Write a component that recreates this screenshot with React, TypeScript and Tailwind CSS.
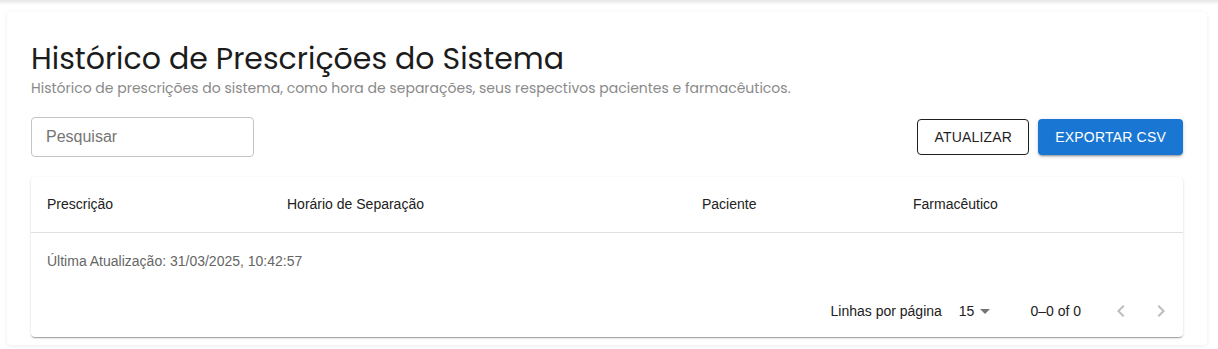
import React from 'react';

// --- Prescription history page ---
const columns = [
  { label: 'Prescrição', width: 'w-[240px]' },
  { label: 'Horário de Separação', width: 'w-[415px]' },
  { label: 'Paciente', width: 'w-[211px]' },
  { label: 'Farmacêutico', width: 'flex-1' },
];

const Chevron = ({ dir }: { dir: 'left' | 'right' }) => (
  <svg width="24" height="24" viewBox="0 0 24 24" fill="#bdbdbd">
    {dir === 'left' ? (
      <path d="M15.41 7.41 14 6l-6 6 6 6 1.41-1.41L10.83 12z" />
    ) : (
      <path d="M10 6 8.59 7.41 13.17 12l-4.58 4.59L10 18l6-6z" />
    )}
  </svg>
);

export default function App() {
  return (
    <div className="relative min-h-[349px] bg-white font-['Liberation_Sans',Arial,sans-serif]">
      <div className="absolute inset-x-0 top-0 h-[5px] bg-gradient-to-b from-[#e6e6e6] to-white" />
      <div className="pl-[7px] pr-[11px] pt-[12px]">
        <div className="rounded-[4px] bg-white px-6 pt-[28px] pb-[8px] shadow-[0_1px_4px_rgba(0,0,0,0.08)]">
          <h1 className="font-['Poppins','Inter',sans-serif] text-[30px] leading-[38px] text-[#1c1c1c]">
            Histórico de Prescrições do Sistema
          </h1>
          <p className="font-['Poppins','Inter',sans-serif] text-[14px] leading-[20px] text-[#8a8a8a]">
            Histórico de prescrições do sistema, como hora de separações, seus respectivos pacientes e farmacêuticos.
          </p>

          <div className="mt-[19px] flex items-center justify-between">
            <div className="flex h-[40px] w-[223px] items-center rounded-[4px] border border-[#c4c4c4] px-[14px] text-[16px] text-[#757575]">
              Pesquisar
            </div>
            <div className="flex items-center gap-[9px]">
              <button className="h-[36px] rounded-[4px] border border-[#1f1f1f] px-[16px] text-[14px] tracking-[0.2px] text-[#1f1f1f]">
                ATUALIZAR
              </button>
              <button className="h-[36px] rounded-[4px] bg-[#1976d2] px-[17px] text-[14px] tracking-[0.2px] text-white shadow-[0_3px_1px_-2px_rgba(0,0,0,0.2),0_2px_2px_0_rgba(0,0,0,0.14),0_1px_5px_0_rgba(0,0,0,0.12)]">
                EXPORTAR CSV
              </button>
            </div>
          </div>

          <div className="mt-[20px] rounded-[4px] bg-white shadow-[0_2px_1px_-1px_rgba(0,0,0,0.2),0_1px_1px_0_rgba(0,0,0,0.14),0_1px_3px_0_rgba(0,0,0,0.12)]">
            <div className="flex h-[56px] items-center border-b border-[#e0e0e0] text-[14px] text-[#212121]">
              {columns.map(c => (
                <div key={c.label} className={`${c.width} px-4`}>
                  {c.label}
                </div>
              ))}
            </div>
            <div className="px-4 pt-[18px] text-[14px] leading-[20px] text-[#666666]">
              Última Atualização: 31/03/2025, 10:42:57
            </div>
            <div className="mt-[14px] flex h-[52px] items-center justify-end pr-[10px] text-[14px] text-[#212121]">
              <span>Linhas por página</span>
              <span className="ml-[17px] flex items-center">
                15
                <svg width="24" height="24" viewBox="0 0 24 24" fill="#757575" className="ml-[-1px]">
                  <path d="M7 10l5 5 5-5z" />
                </svg>
              </span>
              <span className="ml-[33px]">0–0 of 0</span>
              <div className="ml-[28px] flex items-center gap-[16px]">
                <Chevron dir="left" />
                <Chevron dir="right" />
              </div>
            </div>
          </div>
        </div>
      </div>
    </div>
  );
}
